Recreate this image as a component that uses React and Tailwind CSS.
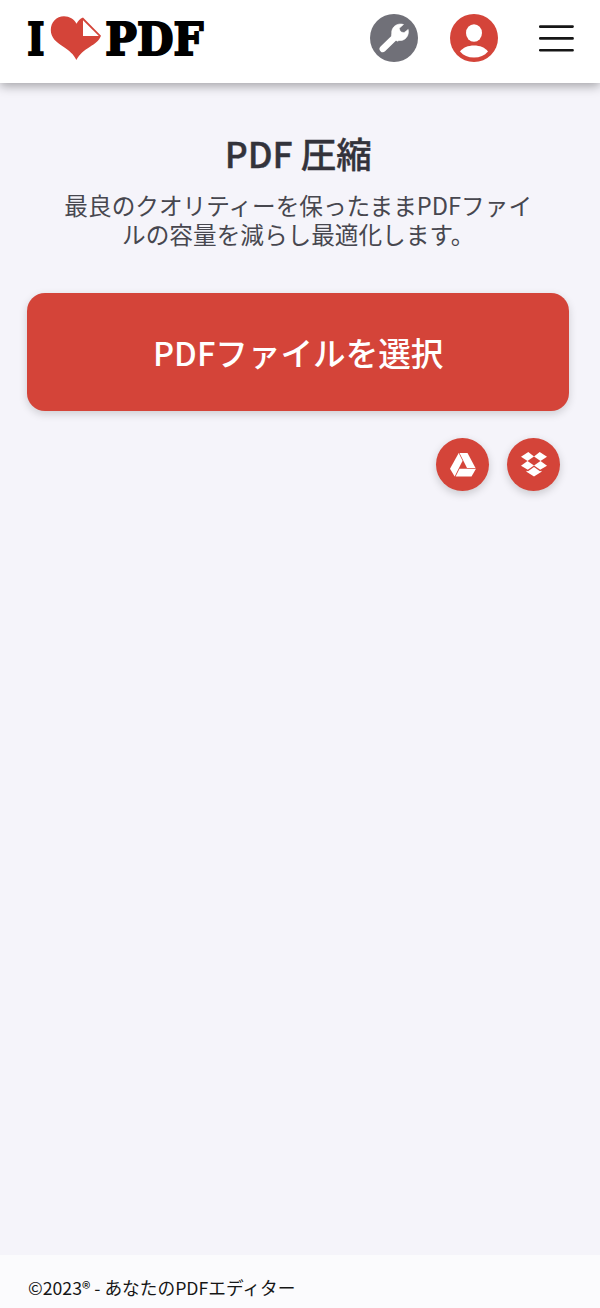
function Logo() {
  return (
    <svg width="190" height="74" viewBox="22 1 190 74" role="img" aria-label="I love PDF">
      <g fontFamily="'DejaVu Serif', serif" fontWeight="700" fontSize="44" fill="#000" stroke="#000" strokeWidth="2">
        <text x="27.300" y="54.700" textLength="17.200" lengthAdjust="spacingAndGlyphs">I</text>
        <text x="105.300" y="54.700" textLength="98" lengthAdjust="spacingAndGlyphs">PDF</text>
      </g>
      <path
        fill="#d44439"
        d="M76.300 60C74 54.500 69 50.500 63 46.500C56 42 50.800 37.500 50.800 30C50.800 22 56.500 16.200 64 16.200C69.500 16.200 74 19 76.500 23.700C78 20.800 80 18.800 83 17.500L101 35.800C99 41 95 43.700 90 46.700C84 50.500 79.500 54 76.300 60Z"
      />
      <path fill="#fff" d="M83 20.200L98.800 36H83Z" />
    </svg>
  );
}

function ToolsIcon() {
  return (
    <svg width="48" height="48" viewBox="0 0 48 48">
      <circle cx="24" cy="24" r="24" fill="#707078" />
      <g transform="translate(-370.500 -14.300)">
        <path d="M383.300 49.200L399 34" stroke="#fff" strokeWidth="6.500" strokeLinecap="round" />
        <path
          fill="#fff"
          d="M404 24.800C398 22.800 391.800 27 392.200 33.500L392 36L397.500 41.500L399.500 40.800C405.500 41.500 410 36 408.700 29.700L404.500 33L400.800 32.100L399.700 28.600Z"
          stroke="#fff"
          strokeWidth=".6"
          strokeLinejoin="round"
        />
      </g>
    </svg>
  );
}

function UserIcon() {
  return (
    <svg width="48" height="48" viewBox="0 0 48 48">
      <circle cx="24" cy="24" r="24" fill="#d44439" />
      <ellipse cx="24" cy="19" rx="8" ry="8.800" fill="#fff" />
      <path fill="#fff" d="M10 37.500C13 33.500 18 31.500 24 31.500S35 33.500 38 37.500C34.500 41.500 30 43.500 24 43.500S13.500 41.500 10 37.500Z" />
    </svg>
  );
}

function MenuIcon() {
  return (
    <svg width="36" height="28" viewBox="0 0 36 28" stroke="#161616" strokeWidth="2.600" strokeLinecap="round">
      <path d="M1.200 1.600H33.600M1.200 13.400H33.600M1.200 25.200H33.600" />
    </svg>
  );
}

function DriveIcon() {
  return (
    <svg width="26" height="24" viewBox="0 0 26 24" fill="#fff">
      <path d="M8.700 0L12.600 7.700L4.700 23.500L0 15.800Z" />
      <path d="M9.500 0H17.500L25.500 15H17Z" />
      <path d="M9.500 15.800H26L21.500 23.500H5.600Z" />
    </svg>
  );
}

function DropboxIcon() {
  return (
    <svg width="26" height="25" viewBox="0 0 26 25" fill="#fff">
      <path d="M7.300 0L13 4.500L6.500 9L0 4.800Z" />
      <path d="M18.700 0L26 4.800L19.500 9L13 4.500Z" />
      <path d="M6.500 9L13 13.500L6.800 17.800L0 13.800Z" />
      <path d="M19.500 9L26 13.800L19.200 17.800L13 13.500Z" />
      <path d="M13 15L19 19.200L20.500 18.800V19.800L13 24.600L5.500 19.800V18.800L7 19.200Z" />
    </svg>
  );
}

export default function App() {
  return (
    <div className="flex h-[1308px] w-[600px] flex-col overflow-hidden bg-[#f5f4fa] font-['Noto_Sans_CJK_JP',sans-serif]">
      <header className="flex h-[83px] shrink-0 items-start bg-white pl-[22px] shadow-[0_3px_10px_rgba(0,0,0,0.34)]">
        <div className="mt-px">
          <Logo />
        </div>
        <nav className="ml-auto flex items-start pr-[25px]">
          <button className="mt-[14.300px] mr-8" aria-label="ツール"><ToolsIcon /></button>
          <button className="mt-[14.300px] mr-[41px]" aria-label="アカウント"><UserIcon /></button>
          <button className="mt-[25px]" aria-label="メニュー"><MenuIcon /></button>
        </nav>
      </header>

      <main className="flex flex-1 flex-col pr-[31px] pl-[27.400px]">
        <h1 className="mt-[46px] text-center text-[35.500px] leading-[48px] font-medium text-[#33333b] [-webkit-text-stroke:0.4px_#33333b]">PDF 圧縮</h1>
        <p className="mt-[14px] text-center text-[23.650px] leading-[29px] text-[#47474f]">
          最良のクオリティーを保ったままPDFファイ
          <br />
          ルの容量を減らし最適化します。
        </p>
        <button className="mt-[44px] h-[118px] shrink-0 rounded-[18px] bg-[#d44439] text-[32.600px] font-medium text-white shadow-[0_3px_8px_rgba(0,0,0,0.16)]">
          PDFファイルを選択
        </button>
        <div className="mt-[27px] mr-[9px] flex justify-end gap-[18px]">
          <button className="flex size-[53px] items-center justify-center rounded-full bg-[#d44439] shadow-[0_3px_8px_rgba(0,0,0,0.18)]" aria-label="Google Drive">
            <DriveIcon />
          </button>
          <button className="flex size-[53px] items-center justify-center rounded-full bg-[#d44439] shadow-[0_3px_8px_rgba(0,0,0,0.18)]" aria-label="Dropbox">
            <DropboxIcon />
          </button>
        </div>
      </main>

      <footer className="h-[53px] shrink-0 bg-[#fbfbfd] pt-[19px] pl-7 text-[17.700px] leading-[26px] text-[#161616]">
        ©2023® - あなたのPDFエディター
      </footer>
    </div>
  );
}
